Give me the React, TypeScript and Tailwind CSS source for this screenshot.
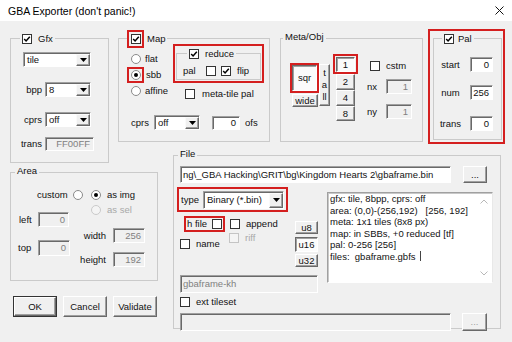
import React from "react";

type Cls = { className?: string };

function Check({ on = false, dis = false, className = "" }: { on?: boolean; dis?: boolean } & Cls) {
  return (
    <span
      className={`relative block w-[10px] h-[10px] shrink-0 border ${
        dis ? "border-[#c4c4c4] bg-[#f4f4f4]" : "border-[#333] bg-white"
      } ${className}`}
    >
      {on && (
        <svg viewBox="0 0 8 8" className="absolute inset-0 w-full h-full">
          <path d="M1.2 3.9 L3.1 5.9 L6.8 1.7" fill="none" stroke="#000" strokeWidth="1.5" />
        </svg>
      )}
    </span>
  );
}

function Radio({ on = false, dis = false, className = "" }: { on?: boolean; dis?: boolean } & Cls) {
  return (
    <span
      className={`flex items-center justify-center w-[10px] h-[10px] shrink-0 rounded-full border ${
        dis ? "border-[#cacaca] bg-[#f4f4f4]" : "border-[#8a8a8a] bg-white"
      } ${className}`}
    >
      {on && <span className="block w-[4px] h-[4px] rounded-full bg-black" />}
    </span>
  );
}

function Combo({ value, className = "" }: { value: string } & Cls) {
  return (
    <div
      className={`flex shrink-0 bg-white border border-t-[#a0a0a0] border-l-[#a0a0a0] border-b-white border-r-white shadow-[inset_1px_1px_0_#696969] ${className}`}
    >
      <span className="flex-1 flex items-center pl-[3px] pt-[1px] overflow-hidden whitespace-nowrap">{value}</span>
      <span className="flex items-center justify-center w-[14px] mt-[1px] bg-[#f0f0f0] border border-t-[#fafafa] border-l-[#fafafa] border-b-[#696969] border-r-[#696969] shadow-[inset_-1px_-1px_0_#a0a0a0]">
        <svg width="7" height="4" viewBox="0 0 7 4">
          <path d="M0 0H7L3.5 4Z" fill="#000" />
        </svg>
      </span>
    </div>
  );
}

function Edit({ value = "", dis = false, left = false, className = "" }: { value?: string; dis?: boolean; left?: boolean } & Cls) {
  return (
    <div
      className={`flex items-center shrink-0 overflow-hidden whitespace-nowrap border border-t-[#a0a0a0] border-l-[#a0a0a0] border-b-white border-r-white shadow-[inset_1px_1px_0_#696969] ${
        dis ? "bg-[#f0f0f0] text-[#808080]" : "bg-white"
      } ${left ? "justify-start pl-[2px]" : "justify-end pr-[3px]"} ${className}`}
    >
      {value}
    </div>
  );
}

function Btn({
  label,
  down = false,
  dis = false,
  className = "",
  children,
}: { label?: string; down?: boolean; dis?: boolean; children?: React.ReactNode } & Cls) {
  return (
    <div
      className={`flex items-center justify-center shrink-0 border ${
        down
          ? "border-t-[#696969] border-l-[#696969] border-b-white border-r-white shadow-[inset_1px_1px_0_#a0a0a0] bg-[#fbfbfb]"
          : "border-t-white border-l-white border-b-[#696969] border-r-[#696969] shadow-[inset_-1px_-1px_0_#a0a0a0] bg-[#f0f0f0]"
      } ${dis ? "text-[#a0a0a0]" : ""} ${className}`}
    >
      {label}
      {children}
    </div>
  );
}

const INFO = [
  "gfx: tile, 8bpp, cprs: off",
  "area: (0,0)-(256,192)   [256, 192]",
  "meta: 1x1 tiles (8x8 px)",
  "map: in SBBs, +0 reduced [tf]",
  "pal: 0-256 [256]",
];

export default function App() {
  return (
    <div className="w-[512px] h-[342px] overflow-hidden bg-[#f0f0f0] text-[9.5px] leading-[12px] text-[#111] font-['Liberation_Sans',Arial,sans-serif]">
      {/* title bar */}
      <div className="h-[21px] bg-white flex items-center justify-between pl-[8px] pr-[8px]">
        <span className="text-[10.5px] text-black">GBA Exporter (don't panic!)</span>
        <svg width="9" height="9" viewBox="0 0 9 9">
          <path d="M0.5 0.5L8.5 8.5M8.5 0.5L0.5 8.5" stroke="#111" strokeWidth="1" />
        </svg>
      </div>

      {/* top row */}
      <div className="flex items-start pl-[10px] pt-[8px]">
        {/* Gfx */}
        <div className="relative mt-[9px] w-[99px] h-[125px] shrink-0 border border-[#cacaca]">
          <span className="absolute left-[9px] top-[-5px] flex items-center h-[10px] px-[2px] bg-[#f0f0f0]">
            <Check on />
            <span className="ml-[6px]">Gfx</span>
          </span>
          <div className="flex flex-col pt-[13px]">
            <Combo value="tile" className="ml-[12px] w-[68px] h-[15px]" />
            <div className="flex items-center mt-[15px]">
              <span className="w-[31px] text-right">bpp</span>
              <Combo value="8" className="ml-[3px] w-[46px] h-[15px]" />
            </div>
            <div className="flex items-center mt-[15px]">
              <span className="w-[31px] text-right">cprs</span>
              <Combo value="off" className="ml-[3px] w-[46px] h-[15px]" />
            </div>
            <div className="flex items-center mt-[10px]">
              <span className="w-[31px] text-right">trans</span>
              <Edit value="FF00FF" dis className="ml-[3px] w-[49px] h-[14px]" />
            </div>
          </div>
        </div>

        {/* Map */}
        <div className="relative ml-[9px] mt-[9px] w-[152px] h-[104px] shrink-0 border border-[#cacaca]">
          <span className="absolute left-[8px] top-[-9px] flex items-center pr-[2px] bg-[#f0f0f0]">
            <span className="block border-2 border-[#d41f1f] pl-[2px] pr-[1px] py-[2px]">
              <Check on />
            </span>
            <span className="ml-[3px]">Map</span>
          </span>
          <div className="flex items-start">
            <div className="flex flex-col ml-[8px] mt-[12px] w-[44px] shrink-0">
              <div className="flex items-center h-[16px]">
                <Radio className="ml-[4px]" />
                <span className="ml-[4px]">flat</span>
              </div>
              <div className="flex items-center h-[16px]">
                <span className="block border-2 border-[#d41f1f] pl-[2px] pr-[1px] py-[1px]">
                  <Radio on />
                </span>
                <span className="ml-[2px]">sbb</span>
              </div>
              <div className="flex items-center h-[16px]">
                <Radio className="ml-[4px]" />
                <span className="ml-[4px]">affine</span>
              </div>
            </div>
            <div className="flex flex-col ml-[2px] mt-[5px]">
              <div className="w-[91px] h-[39px] border-2 border-[#d41f1f]">
                <div className="relative ml-[1px] mt-[7px] w-[85px] h-[27px] border border-[#cacaca]">
                  <span className="absolute left-[10px] top-[-5px] flex items-center h-[10px] px-[2px] bg-[#f0f0f0]">
                    <Check on />
                    <span className="ml-[6px]">reduce</span>
                  </span>
                  <div className="flex items-center h-[10px] mt-[12px]">
                    <span className="ml-[6px] w-[23px]">pal</span>
                    <Check />
                    <Check on className="ml-[5px]" />
                    <span className="ml-[6px]">flip</span>
                  </div>
                </div>
              </div>
              <div className="flex items-center h-[10px] mt-[6px]">
                <Check className="ml-[12px]" />
                <span className="ml-[7px] whitespace-nowrap">meta-tile pal</span>
              </div>
            </div>
          </div>
          <div className="flex items-center mt-[16px] h-[15px]">
            <span className="ml-[12px] w-[23px]">cprs</span>
            <Combo value="off" className="w-[46px] h-[15px]" />
            <Edit value="0" className="ml-[12px] w-[28px] h-[14px]" />
            <span className="ml-[5px]">ofs</span>
          </div>
        </div>

        {/* Meta/Obj */}
        <div className="relative ml-[10px] mt-[9px] w-[143px] h-[104px] shrink-0 border border-[#cacaca]">
          <span className="absolute left-[2px] top-[-8px] px-[2px] bg-[#f0f0f0]">Meta/Obj</span>
          <div className="flex items-start">
            <div className="flex items-start ml-[9px] mt-[24px]">
              <div className="flex flex-col">
                <div className="w-[29px] h-[30px] border-2 border-[#d41f1f]">
                  <Btn down label="sqr" className="w-full h-full" />
                </div>
                <Btn label="wide" className="ml-[2px] mt-[1px] w-[26px] h-[13px]" />
              </div>
              <Btn className="mt-[1px] w-[11px] h-[42px] flex-col">
                <span>t</span>
                <span>a</span>
                <span>ll</span>
              </Btn>
            </div>
            <div className="flex flex-col ml-[3px] mt-[15px]">
              <div className="w-[25px] h-[20px] border-2 border-[#d41f1f] pl-[1px] pt-[1px]">
                <Btn down label="1" className="w-[19px] h-[15px]" />
              </div>
              <Btn label="2" className="ml-[3px] w-[19px] h-[16px]" />
              <Btn label="4" className="ml-[3px] w-[19px] h-[16px]" />
              <Btn label="8" className="ml-[3px] w-[19px] h-[15px]" />
            </div>
            <div className="flex flex-col ml-[8px]">
              <div className="flex items-center h-[10px] mt-[22px]">
                <Check className="ml-[4px]" />
                <span className="ml-[6px]">cstm</span>
              </div>
              <div className="flex items-center mt-[8px]">
                <span className="w-[20px] pl-[1px]">nx</span>
                <Edit value="1" dis className="w-[26px] h-[15px]" />
              </div>
              <div className="flex items-center mt-[10px]">
                <span className="w-[20px] pl-[1px]">ny</span>
                <Edit value="1" dis className="w-[26px] h-[15px]" />
              </div>
            </div>
          </div>
        </div>

        {/* Pal */}
        <div className="ml-[5px] w-[77px] h-[115px] shrink-0 border-2 border-[#d41f1f]">
          <div className="relative ml-[3px] mt-[7px] w-[69px] h-[102px] border border-[#cacaca]">
            <span className="absolute left-[8px] top-[-5px] flex items-center h-[10px] px-[2px] bg-[#f0f0f0]">
              <Check on />
              <span className="ml-[4px]">Pal</span>
            </span>
            <div className="flex items-center mt-[18px]">
              <span className="w-[33px] text-center">start</span>
              <Edit value="0" className="ml-[3px] w-[23px] h-[15px]" />
            </div>
            <div className="flex items-center mt-[13px]">
              <span className="w-[33px] text-center">num</span>
              <Edit value="256" className="ml-[3px] w-[23px] h-[15px]" />
            </div>
            <div className="flex items-center mt-[16px]">
              <span className="w-[33px] text-center">trans</span>
              <Edit value="0" className="ml-[3px] w-[23px] h-[15px]" />
            </div>
          </div>
        </div>
      </div>

      {/* bottom row */}
      <div className="flex items-start pl-[10px] -mt-[8px]">
        <div className="flex flex-col w-[148px] shrink-0">
          {/* Area */}
          <div className="relative mt-[17px] h-[109px] border border-[#cacaca]">
            <span className="absolute left-[4px] top-[-8px] px-[2px] bg-[#f0f0f0]">Area</span>
            <div className="flex items-center h-[10px] mt-[17px] ml-[26px]">
              <span className="w-[36px]">custom</span>
              <Radio />
              <Radio on className="ml-[8px]" />
              <span className="ml-[6px] whitespace-nowrap">as img</span>
            </div>
            <div className="flex items-start">
              <div className="flex flex-col w-[62px] shrink-0">
                <div className="flex items-center mt-[12px]">
                  <span className="w-[27px] pl-[8px]">left</span>
                  <Edit value="0" dis className="w-[31px] h-[15px]" />
                </div>
                <div className="flex items-center mt-[13px]">
                  <span className="w-[27px] pl-[7px]">top</span>
                  <Edit value="0" dis className="w-[32px] h-[16px]" />
                </div>
              </div>
              <div className="flex flex-col">
                <div className="flex items-center h-[10px] mt-[5px]">
                  <Radio dis className="ml-[18px]" />
                  <span className="ml-[6px] text-[#a8a8a8] whitespace-nowrap">as sel</span>
                </div>
                <div className="flex items-center mt-[13px]">
                  <span className="w-[36px] text-right pr-[3px]">width</span>
                  <Edit value="256" dis className="ml-[4px] w-[32px] h-[15px]" />
                </div>
                <div className="flex items-center mt-[9px]">
                  <span className="w-[36px] text-right pr-[3px]">height</span>
                  <Edit value="192" dis className="ml-[4px] w-[32px] h-[15px]" />
                </div>
              </div>
            </div>
          </div>
          {/* buttons */}
          <div className="flex mt-[15px]">
            <div className="ml-[3px] border border-[#333]">
              <Btn label="OK" className="w-[42px] h-[19px]" />
            </div>
            <Btn label="Cancel" className="ml-[6px] w-[44px] h-[21px]" />
            <Btn label="Validate" className="ml-[6px] w-[44px] h-[21px]" />
          </div>
        </div>

        {/* File */}
        <div className="relative ml-[15px] w-[328px] h-[174px] shrink-0 border border-[#cacaca]">
          <span className="absolute left-[4px] top-[-8px] px-[2px] bg-[#f0f0f0]">File</span>
          <div className="flex items-center mt-[10px]">
            <Edit left value={"ng\\_GBA Hacking\\GRIT\\bg\\Kingdom Hearts 2\\gbaframe.bin"} className="ml-[6px] w-[271px] h-[17px]" />
            <Btn label="..." className="ml-[12px] w-[24px] h-[17px]" />
          </div>
          <div className="flex items-start">
            <div className="flex flex-col w-[153px] shrink-0">
              <div className="flex items-start">
                <div className="flex flex-col w-[121px] shrink-0">
                  <div className="flex items-center ml-[3px] mt-[4px] w-[111px] h-[25px] border-2 border-[#d41f1f]">
                    <span className="ml-[2px] w-[22px]">type</span>
                    <Combo value="Binary (*.bin)" className="w-[81px] h-[18px]" />
                  </div>
                  <div className="flex items-center mt-[4px]">
                    <div className="flex items-center ml-[10px] h-[16px] border-2 border-[#d41f1f] pl-[1px] pr-[1px]">
                      <span className="w-[25px] whitespace-nowrap">h file</span>
                      <Check />
                    </div>
                    <Check className="ml-[5px]" />
                    <span className="ml-[6px]">append</span>
                  </div>
                  <div className="flex items-start">
                    <div className="flex items-center h-[10px] mt-[7px] ml-[6px]">
                      <Check />
                      <span className="ml-[6px] w-[27px]">name</span>
                    </div>
                    <div className="flex items-center h-[10px] mt-[1px] ml-[6px]">
                      <Check dis />
                      <span className="ml-[6px] text-[#a8a8a8]">riff</span>
                    </div>
                  </div>
                </div>
                <div className="flex flex-col mt-[38px]">
                  <Btn label="u8" className="w-[23px] h-[13px]" />
                  <Btn down label="u16" className="mt-[3px] w-[23px] h-[15px]" />
                  <Btn label="u32" className="mt-[2px] w-[23px] h-[13px]" />
                </div>
              </div>
              <Edit left dis value="gbaframe-kh" className="ml-[6px] mt-[8px] w-[138px] h-[18px]" />
            </div>
            <div className="flex mt-[9px] w-[166px] h-[91px] bg-white border border-t-[#a0a0a0] border-l-[#a0a0a0] border-b-white border-r-[#e8e8e8] shadow-[inset_1px_1px_0_#c8c8c8]">
              <div className="flex-1 flex flex-col pl-[2px] leading-[11.5px] whitespace-pre">
                {INFO.map((l) => (
                  <span key={l}>{l}</span>
                ))}
                <span className="flex items-center">
                  {"files:  gbaframe.gbfs"}
                  <span className="inline-block ml-[4px] w-[1px] h-[10px] bg-[#444]" />
                </span>
              </div>
              <div className="flex flex-col items-center justify-between w-[16px] py-[6px]">
                <svg width="8" height="5" viewBox="0 0 8 5">
                  <path d="M0.5 4.5L4 1L7.5 4.5" fill="none" stroke="#b8b8b8" strokeWidth="1" />
                </svg>
                <svg width="8" height="5" viewBox="0 0 8 5">
                  <path d="M0.5 0.5L4 4L7.5 0.5" fill="none" stroke="#b8b8b8" strokeWidth="1" />
                </svg>
              </div>
            </div>
          </div>
          <div className="flex items-center h-[10px] mt-[4px] ml-[6px]">
            <Check />
            <span className="ml-[6px]">ext tileset</span>
          </div>
          <div className="flex items-center mt-[6px]">
            <Edit left dis className="ml-[6px] w-[271px] h-[18px]" />
            <Btn dis label="..." className="ml-[11px] w-[25px] h-[18px]" />
          </div>
        </div>
      </div>
    </div>
  );
}
